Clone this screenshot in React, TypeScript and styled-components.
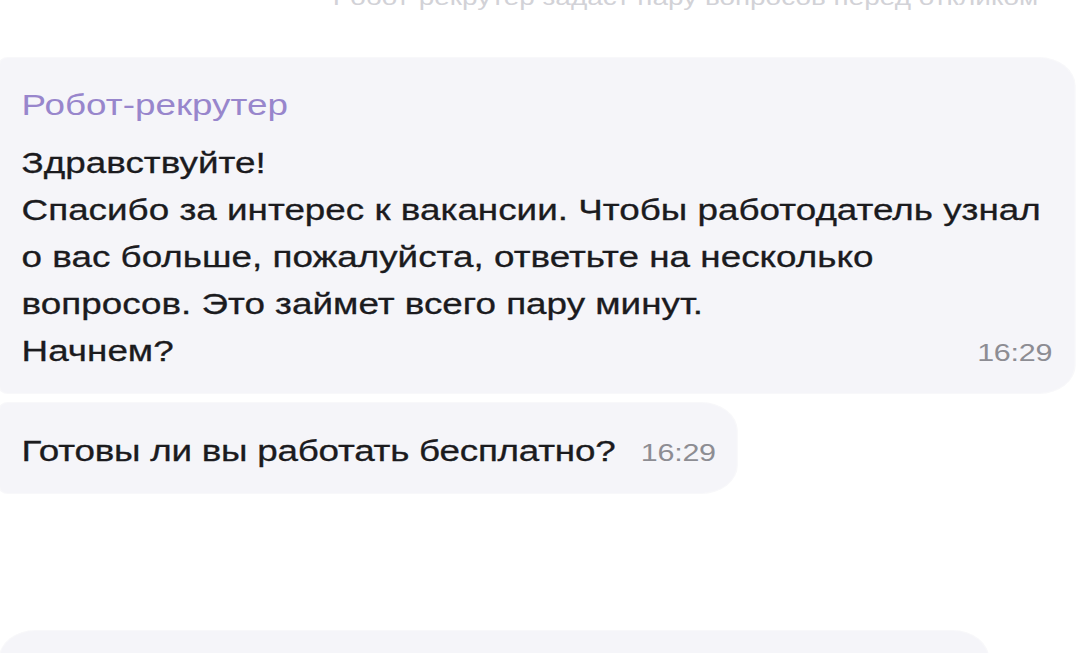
import React from "react";
import styled, { createGlobalStyle } from "styled-components";

// the chat is drawn on a narrower column and stretched to fill the screen width
const STRETCH = 1.27;
const COLUMN = 1080 / STRETCH;

const GlobalStyle = createGlobalStyle`
  html, body {
    margin: 0;
    padding: 0;
    background: #ffffff;
    overflow: hidden;
  }
  body {
    font-family: "Liberation Sans", Arial, sans-serif;
    -webkit-font-smoothing: antialiased;
  }
`;

const Stage = styled.div`
  width: ${COLUMN}px;
  height: 653px;
  overflow: hidden;
  transform: scaleX(${STRETCH});
  transform-origin: 0 0;
`;

const TopNote = styled.div`
  height: 12px;
  overflow: hidden;
  padding-left: 262px;
  color: #d2d2d7;
  font-size: 22px;
  line-height: 22px;
  span {
    display: block;
    margin-top: -13px;
    white-space: nowrap;
  }
`;

const Feed = styled.div<{ $top: number }>`
  display: flex;
  flex-direction: column;
  align-items: flex-start;
  gap: 10px;
  padding-top: ${(p) => p.$top}px;
`;

const Bubble = styled.div<{ $width?: number; $tail?: boolean }>`
  box-sizing: border-box;
  width: ${(p) => (p.$width ? `${p.$width}px` : "auto")};
  background: #f5f5f9;
  border-radius: 6px 28px 28px 6px;
  box-shadow: 0 0 0 1px rgba(40, 40, 80, 0.03);
  padding: 29px 18px 17px 17px;
  color: #1b1b1e;
  font-size: 29px;
  -webkit-text-stroke: 0.3px #1b1b1e;
  ${(p) => p.$tail && "height: 200px; border-top-left-radius: 28px;"}
`;

const Sender = styled.div`
  font-size: 29px;
  line-height: 36px;
  color: #9886cc;
  -webkit-text-stroke: 0;
  margin-bottom: 17px;
`;

const Body = styled.div`
  line-height: 47px;
`;

const LastLine = styled.div`
  display: flex;
  justify-content: space-between;
  align-items: baseline;
`;

const Time = styled.span`
  font-size: 24px;
  color: #8d8d93;
  -webkit-text-stroke: 0;
  letter-spacing: -0.2px;
`;

const ShortBubble = styled(Bubble)`
  display: flex;
  align-items: baseline;
  gap: 20px;
  padding: 28px 16px 20px 17px;
  line-height: 40px;
  letter-spacing: -0.2px;
`;

export default function App() {
  return (
    <>
      <GlobalStyle />
      <Stage>
        <TopNote>
          <span>Робот-рекрутер задаст пару вопросов перед откликом</span>
        </TopNote>
        <Feed $top={46}>
          <Bubble $width={1075 / STRETCH}>
            <Sender>Робот-рекрутер</Sender>
            <Body>
              Здравствуйте!
              <br />
              Спасибо за интерес к вакансии. Чтобы работодатель узнал
              <br />
              о вас больше, пожалуйста, ответьте на несколько
              <br />
              вопросов. Это займет всего пару минут.
              <LastLine>
                <span>Начнем?</span>
                <Time>16:29</Time>
              </LastLine>
            </Body>
          </Bubble>
          <ShortBubble>
            <span>Готовы ли вы работать бесплатно?</span>
            <Time>16:29</Time>
          </ShortBubble>
        </Feed>
        <Feed $top={138}>
          <Bubble $width={988 / STRETCH} $tail />
        </Feed>
      </Stage>
    </>
  );
}
